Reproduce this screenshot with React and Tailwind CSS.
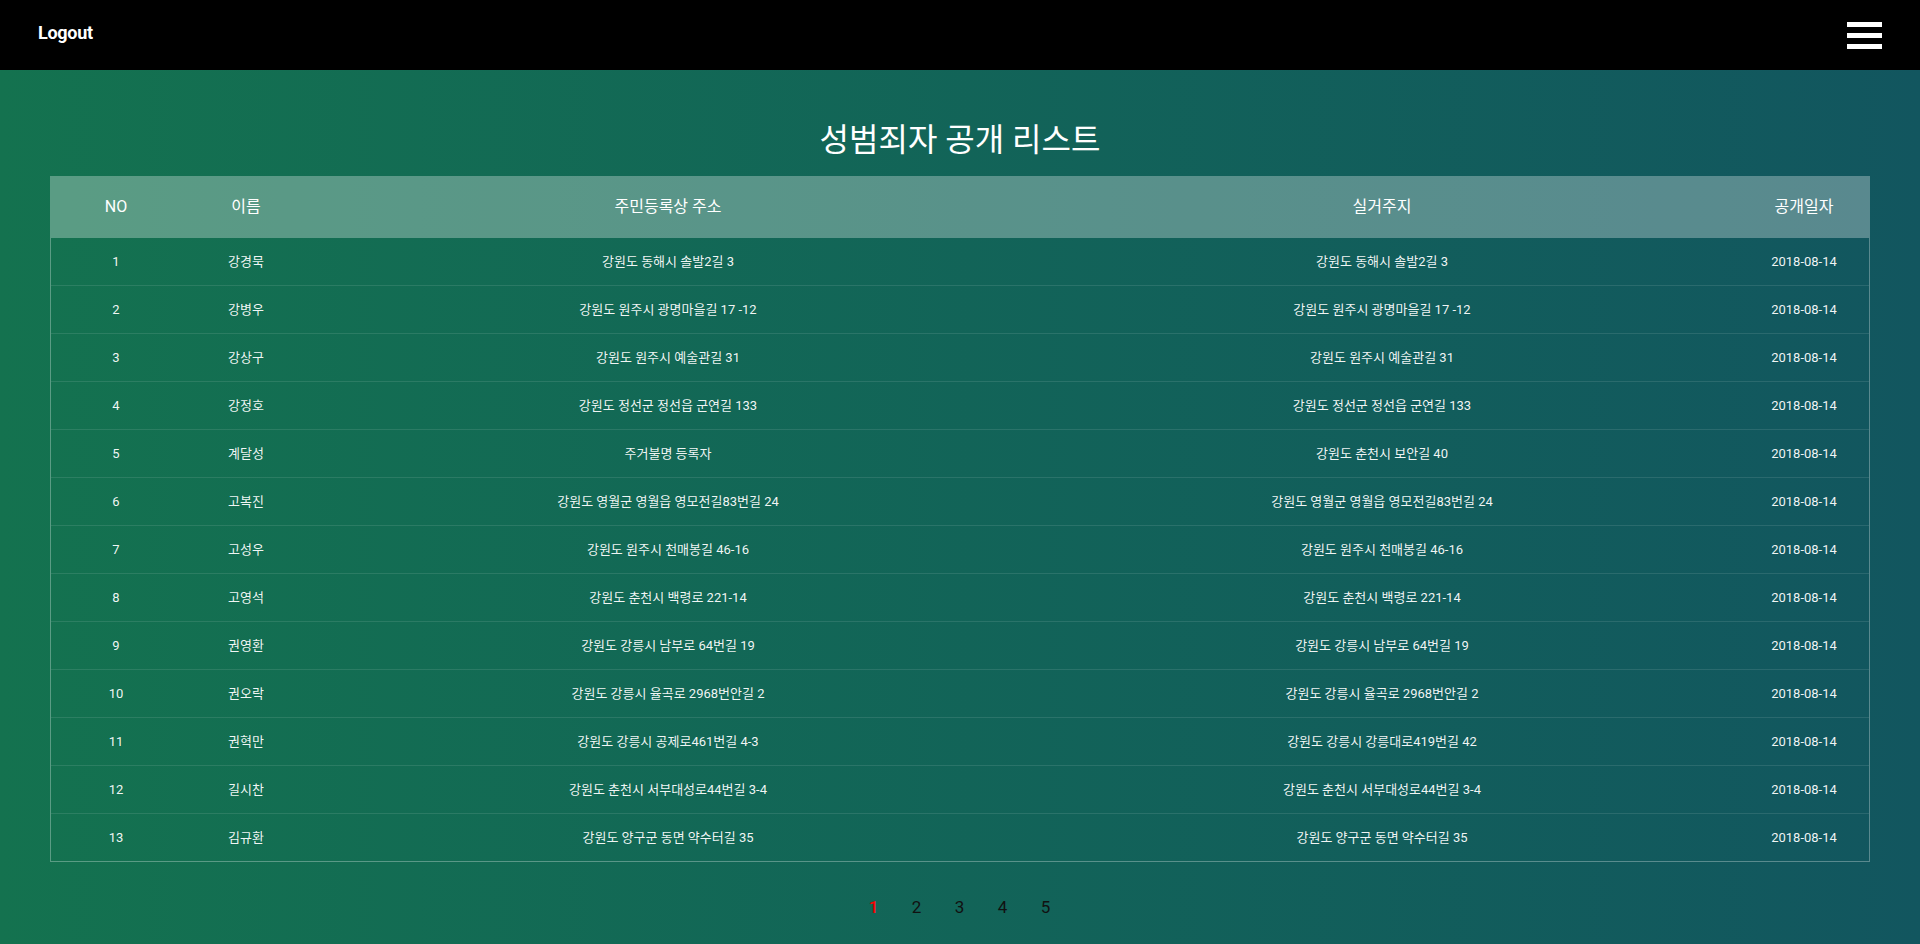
import { useState } from 'react'

const ROWS = [
  ['강경묵', '강원도 동해시 솔발2길 3', '강원도 동해시 솔발2길 3'],
  ['강병우', '강원도 원주시 광명마을길 17 -12', '강원도 원주시 광명마을길 17 -12'],
  ['강상구', '강원도 원주시 예술관길 31', '강원도 원주시 예술관길 31'],
  ['강정호', '강원도 정선군 정선읍 군연길 133', '강원도 정선군 정선읍 군연길 133'],
  ['계달성', '주거불명 등록자', '강원도 춘천시 보안길 40'],
  ['고복진', '강원도 영월군 영월읍 영모전길83번길 24', '강원도 영월군 영월읍 영모전길83번길 24'],
  ['고성우', '강원도 원주시 천매봉길 46-16', '강원도 원주시 천매봉길 46-16'],
  ['고영석', '강원도 춘천시 백령로 221-14', '강원도 춘천시 백령로 221-14'],
  ['권영환', '강원도 강릉시 남부로 64번길 19', '강원도 강릉시 남부로 64번길 19'],
  ['권오락', '강원도 강릉시 율곡로 2968번안길 2', '강원도 강릉시 율곡로 2968번안길 2'],
  ['권혁만', '강원도 강릉시 공제로461번길 4-3', '강원도 강릉시 강릉대로419번길 42'],
  ['길시찬', '강원도 춘천시 서부대성로44번길 3-4', '강원도 춘천시 서부대성로44번길 3-4'],
  ['김규환', '강원도 양구군 동면 약수터길 35', '강원도 양구군 동면 약수터길 35'],
]

const PAGES = [1, 2, 3, 4, 5]

export default function App() {
  const [page, setPage] = useState(1)

  return (
    <div className="min-h-screen flex flex-col font-['Roboto','Noto_Sans_CJK_KR',sans-serif] bg-gradient-to-r from-[#14724f] to-[#12565f] text-white">
      {/* Top bar */}
      <header className="h-[70px] bg-black flex items-center justify-between pl-[38px] pr-[38px] shrink-0">
        <a href="#" className="text-[18px] font-bold tracking-[-0.3px] mb-[5px]">Logout</a>
        <button className="flex flex-col gap-[6px] w-[35px]">
          <span className="block h-[5px] bg-white" />
          <span className="block h-[5px] bg-white" />
          <span className="block h-[5px] bg-white" />
        </button>
      </header>

      <main className="px-[50px] pt-[50px] pb-[20px]">
        <h1 className="text-center text-[32px] leading-[40px] font-normal mb-[16px]">성범죄자 공개 리스트</h1>

        <div className="border-x border-b border-white/30">
          <div className="grid grid-cols-[130px_130px_1fr_1fr_130px] h-[62px] items-center bg-white/30 text-[16px] text-center">
            <div>NO</div>
            <div>이름</div>
            <div>주민등록상 주소</div>
            <div>실거주지</div>
            <div>공개일자</div>
          </div>
          {ROWS.map((r, i) => (
            <div key={i}
              className={`grid grid-cols-[130px_130px_1fr_1fr_130px] items-center text-center text-[13px] text-white/95 ${i < ROWS.length - 1 ? 'h-[48px] border-b border-white/10' : 'h-[47px]'}`}>
              <div>{i + 1}</div>
              <div>{r[0]}</div>
              <div>{r[1]}</div>
              <div>{r[2]}</div>
              <div>2018-08-14</div>
            </div>
          ))}
        </div>

        {/* Pagination */}
        <div className="flex justify-center mt-[34px] ml-[-1px]">
          {PAGES.map((p) => (
            <button key={p} onClick={() => setPage(p)}
              className={`w-[43px] text-[17px] leading-[22px] text-center ${page === p ? 'text-[#ff0000] font-medium' : 'text-[#111111]'}`}>
              {p}
            </button>
          ))}
        </div>
      </main>
    </div>
  )
}
